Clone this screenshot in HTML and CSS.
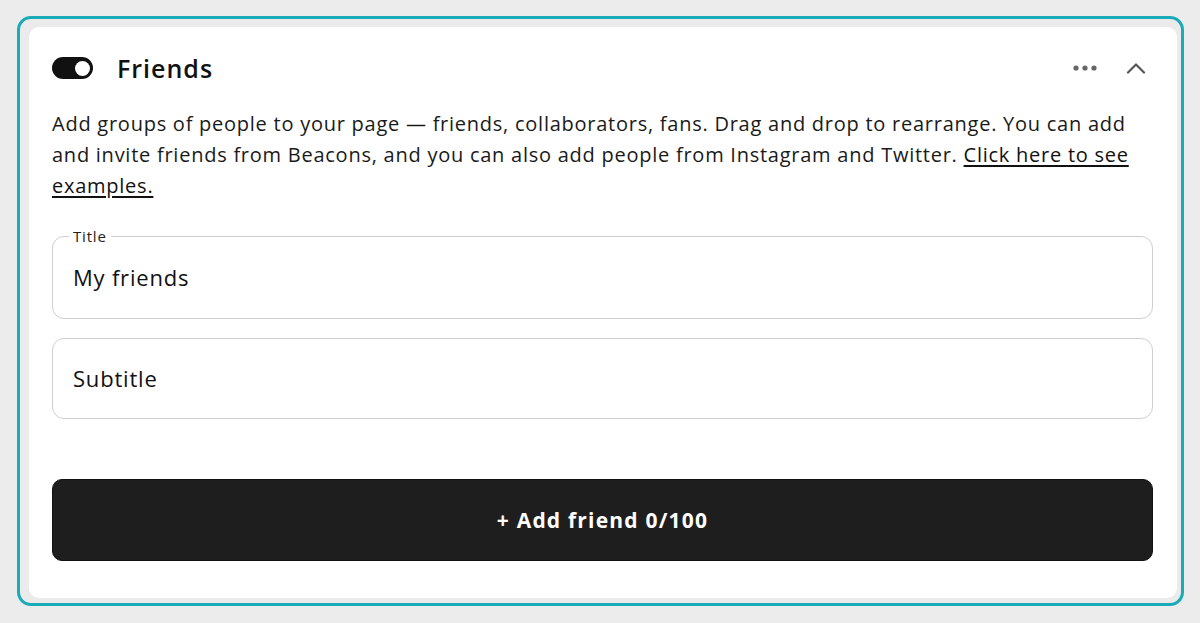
FILE: index.html
```html
<!DOCTYPE html>
<html lang="en">
<head>
<meta charset="utf-8">
<title>Friends</title>
<link rel="stylesheet" href="styles.css">
</head>
<body>
<div class="frame">
  <div class="card">
    <div class="header">
      <div class="toggle"><span class="knob"></span></div>
      <h2 class="title">Friends</h2>
      <div class="actions">
        <svg class="dots" width="26" height="8" viewBox="0 0 26 8"><circle cx="4" cy="4" r="2.6" fill="#666"/><circle cx="13" cy="4" r="2.6" fill="#666"/><circle cx="22" cy="4" r="2.6" fill="#666"/></svg>
        <svg class="chev" width="20" height="12" viewBox="0 0 20 12"><path d="M2 10.5 L10 2.5 L18 10.5" fill="none" stroke="#555" stroke-width="2.2" stroke-linecap="round" stroke-linejoin="round"/></svg>
      </div>
    </div>
    <p class="desc">Add groups of people to your page — friends, collaborators, fans. Drag and drop to rearrange. You can add and invite friends from Beacons, and you can also add people from Instagram and Twitter. <a href="#" class="link">Click here to see examples.</a></p>
    <fieldset class="field field-title">
      <legend class="legend">Title</legend>
      <div class="value">My friends</div>
    </fieldset>
    <fieldset class="field field-sub">
      <div class="value">Subtitle</div>
    </fieldset>
    <button class="add">+ Add friend 0/100</button>
  </div>
</div>
</body>
</html>
```

FILE: styles.css
```css
* { box-sizing: border-box; }
body {
  margin: 0;
  background: #ececec;
  font-family: "Open Sans", "Noto Sans", sans-serif;
  color: #111;
}
.frame {
  margin: 16px 16px 0 17px;
  width: 1167px;
  height: 590px;
  border: 3px solid #19abb8;
  border-radius: 14px;
  padding: 8px 4px 5px 9px;
  background: #ebebeb;
}
.card {
  background: #fff;
  border-radius: 10px;
  height: 100%;
  padding: 0 24px 0 23px;
  display: flex;
  flex-direction: column;
}
.header {
  display: flex;
  align-items: center;
  height: 40px;
  margin-top: 21px;
}
.toggle {
  width: 41px;
  height: 22px;
  border-radius: 11px;
  background: #111;
  position: relative;
  flex: none;
}
.knob {
  position: absolute;
  right: 3px;
  top: 3.5px;
  width: 15px;
  height: 15px;
  border-radius: 50%;
  background: #fff;
}
.title {
  margin: 0 0 0 24px;
  font-size: 25px;
  font-weight: 600;
  letter-spacing: 1px;
  color: #111;
}
.actions {
  margin-left: auto;
  display: flex;
  align-items: center;
  gap: 28px;
  padding-right: 7px;
}
.desc {
  margin: 20px 0 0;
  font-size: 20px;
  line-height: 31px;
  letter-spacing: 0.75px;
  color: #1a1a1a;
}
.link { color: #111; text-decoration: underline; text-underline-offset: 3px; }
.field {
  margin: 0;
  border: 1px solid #cfcfcf;
  border-radius: 12px;
  padding: 0 20px;
  display: block;
  min-width: 0;
}
.field-title {
  margin-top: 26px;
  padding-top: 16px;
  padding-bottom: 26px;
}
.field-sub {
  margin-top: 19px;
  padding-top: 24px;
  padding-bottom: 25px;
}
.legend {
  font-size: 15px;
  line-height: 19px;
  letter-spacing: 0.8px;
  color: #222;
  padding: 0 4px;
  margin-left: -4px;
}
.value {
  font-size: 22px;
  line-height: 30px;
  letter-spacing: 0.8px;
  color: #111;
}
.add {
  margin-top: 60px;
  height: 82px;
  border: 1px solid #111;
  border-radius: 10px;
  background: #1e1e1e;
  color: #fff;
  font-family: inherit;
  font-size: 21px;
  font-weight: 700;
  letter-spacing: 1.2px;
}
```
